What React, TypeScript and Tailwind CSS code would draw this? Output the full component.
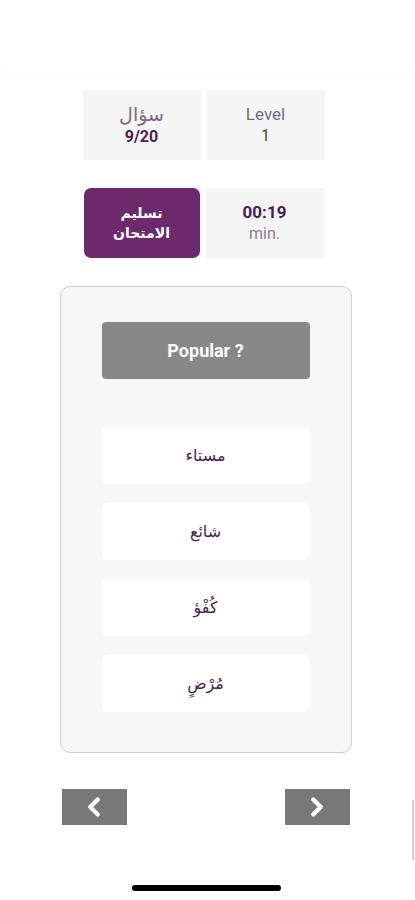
import { ChevronLeft, ChevronRight } from 'lucide-react'

const options = ['مستاء', 'شائع', 'كُفْؤ', 'مُرْضٍ']

function StatCell({ top, bottom, boldTop = false }: { top: string; bottom: string; boldTop?: boolean }) {
  return (
    <div className="flex h-[70px] w-[118px] flex-col items-center justify-center bg-[#f6f5f6] leading-tight">
      <span className={boldTop ? 'text-[17px] font-bold text-[#4d1d50]' : 'text-[17px] text-[#7b6a7c]'}>{top}</span>
      <span className={boldTop ? 'text-[16px] text-[#8a7f8b]' : 'text-[16px] font-bold text-[#4d1d50]'}>{bottom}</span>
    </div>
  )
}

export default function App() {
  return (
    <div
      className="relative flex h-[900px] w-[415px] flex-col items-center overflow-hidden bg-white pr-[4px]"
      style={{ fontFamily: "Roboto, 'DejaVu Sans', sans-serif" }}
    >
      <div className="h-[78px] w-full shrink-0 rounded-b-[16px] bg-white shadow-[0_1px_3px_rgba(0,0,0,0.03)]" />

      <div className="mr-[4px] mt-[12px] flex gap-[6px]">
        <div className="flex h-[70px] w-[118px] flex-col items-center justify-center bg-[#f6f5f6] leading-tight">
          <span className="text-[19px] text-[#7b6a7c]">سؤال</span>
          <span className="text-[16px] font-bold text-[#4d1d50]">9/20</span>
        </div>
        <div className="flex h-[70px] w-[118px] flex-col items-center justify-center bg-[#f6f5f6] leading-tight">
          <span className="text-[17px] text-[#7b6a7c]">Level</span>
          <span className="text-[16px] text-[#4a444a]">1</span>
        </div>
      </div>

      <div className="mr-[4px] mt-[28px] flex gap-[6px]">
        <button className="flex h-[70px] w-[116px] flex-col items-center justify-center rounded-[7px] bg-[#6c2a6d] text-[14px] font-bold leading-[1.45] text-white">
          <span>تسليم</span>
          <span>الامتحان</span>
        </button>
        <StatCell top="00:19" bottom="min." boldTop />
      </div>

      <div className="mt-[28px] flex h-[467px] w-[292px] flex-col items-center rounded-[10px] border border-[#cfcfcf] bg-[#f7f7f7] pt-[35px]">
        <div className="flex h-[57px] w-[208px] items-center justify-center rounded-[4px] bg-[#888888] text-[18px] font-bold text-white">
          Popular ?
        </div>
        <div className="mt-[48px] flex flex-col gap-[19px]">
          {options.map((o) => (
            <div
              key={o}
              className="flex h-[57px] w-[208px] items-center justify-center rounded-[6px] bg-white text-[16px] font-medium text-[#4d1d50]"
              dir="rtl"
            >
              {o}
            </div>
          ))}
        </div>
      </div>

      <div className="mt-[36px] flex w-[288px] justify-between">
        <button className="flex h-[36px] w-[65px] items-center justify-center bg-[#787878] text-white">
          <ChevronLeft size={30} strokeWidth={3.5} />
        </button>
        <button className="flex h-[36px] w-[65px] items-center justify-center bg-[#787878] text-white">
          <ChevronRight size={30} strokeWidth={3.5} />
        </button>
      </div>

      <div className="absolute bottom-[9px] left-[132px] h-[6px] w-[149px] rounded-full bg-black" />
      <div className="absolute right-[1px] top-[800px] h-[60px] w-[2px] bg-[#d0d0d0]" />
    </div>
  )
}
